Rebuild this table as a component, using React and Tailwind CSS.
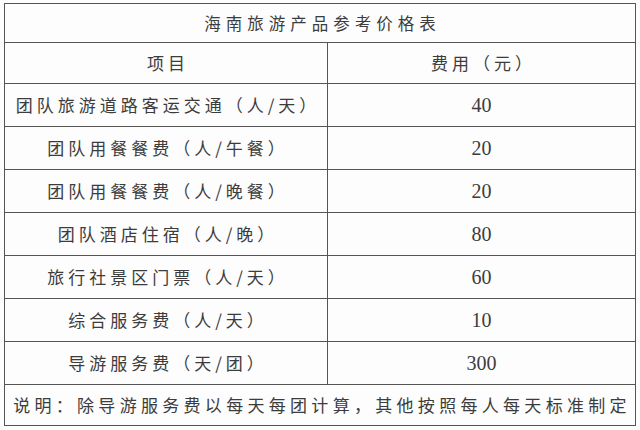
import React from 'react';

const rows = [
  ['团队旅游道路客运交通（人/天）', '40'],
  ['团队用餐餐费（人/午餐）', '20'],
  ['团队用餐餐费（人/晚餐）', '20'],
  ['团队酒店住宿（人/晚）', '80'],
  ['旅行社景区门票（人/天）', '60'],
  ['综合服务费（人/天）', '10'],
  ['导游服务费（天/团）', '300'],
];

const cjk = "font-['Noto_Sans_CJK_SC',sans-serif]";

const App = () => {
  return (
    <div className="w-[640px] h-[430px] bg-[#fdfdfd] pt-[3px] pl-[4px]">
      <div className={`w-[632px] h-[423px] border border-[#555] flex flex-col text-[#3c3c3c] ${cjk}`}>
        <div className="h-[38px] flex items-center justify-center text-[16.5px] tracking-[5px] pl-[5px]">
          海南旅游产品参考价格表
        </div>

        <div className="h-[41px] grid grid-cols-[323px_1fr] border-t border-[#555]">
          <div className="flex items-center justify-center border-r border-[#555] text-[17px] tracking-[4px] pl-[4px]">项目</div>
          <div className="flex items-center justify-center text-[17px] tracking-[4px] pl-[4px]">费用（元）</div>
        </div>

        {rows.map(([name, fee]) => (
          <div key={name} className="h-[43px] grid grid-cols-[323px_1fr] border-t border-[#555]">
            <div className="flex items-center justify-center border-r border-[#555] text-[17px] tracking-[4px] pl-[4px]">{name}</div>
            <div className="flex items-center justify-center font-['Liberation_Serif',serif] text-[20px]">{fee}</div>
          </div>
        ))}

        <div className="flex-1 flex items-center justify-center border-t border-[#555] text-[17px] tracking-[4.3px] pl-[4px]">
          说明：除导游服务费以每天每团计算，其他按照每人每天标准制定
        </div>
      </div>
    </div>
  );
};

export default App;
